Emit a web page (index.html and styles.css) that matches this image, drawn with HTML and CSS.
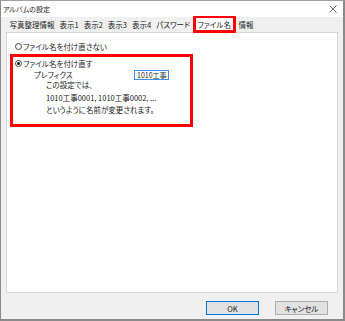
FILE: index.html
```html
<!DOCTYPE html>
<html lang="ja">
<head>
    <meta charset="UTF-8">
    <title>アルバムの設定</title>
    <link rel="stylesheet" href="styles.css">
</head>
<body>
    <div class="window">
        <div class="titlebar">
            <span class="title">アルバムの設定</span>
            <svg class="close" width="8" height="8" viewBox="0 0 8 8">
                <path d="M0.5 0.5 L7.5 7.5 M7.5 0.5 L0.5 7.5" stroke="#666" stroke-width="1" fill="none"/>
            </svg>
        </div>
        <div class="dialog-body">
            <div class="tabs">
                <div class="tab">写真整理情報</div>
                <div class="tab">表示1</div>
                <div class="tab">表示2</div>
                <div class="tab">表示3</div>
                <div class="tab">表示4</div>
                <div class="tab">パスワード</div>
                <div class="tab active">ファイル名</div>
                <div class="tab">情報</div>
            </div>
            <div class="panel">
                <div class="option first">
                    <span class="radio"></span>
                    <span>ファイル名を付け直さない</span>
                </div>
                <div class="highlight">
                    <div class="option">
                        <span class="radio checked"></span>
                        <span>ファイル名を付け直す</span>
                    </div>
                    <div class="prefix-row">
                        <span class="prefix-label">プレフィクス</span>
                        <span class="prefix-input">1010工事</span>
                    </div>
                    <div class="note">
                        <p>この設定では、</p>
                        <p>1010工事0001, 1010工事0002, ...</p>
                        <p>というように名前が変更されます。</p>
                    </div>
                </div>
            </div>
            <div class="buttons">
                <button class="btn default">OK</button>
                <button class="btn">キャンセル</button>
            </div>
        </div>
    </div>
</body>
</html>
```

FILE: styles.css
```css
:root {
    --face-color: #f0f0f0;
    --border-color: #d9d9d9;
    --text-color: #1a1a1a;
    --mark-color: #ff0000;
    --focus-color: #3d8ee6;
}

* {
    margin: 0;
    padding: 0;
    box-sizing: border-box;
}

body {
    width: 345px;
    height: 321px;
    font-family: 'Noto Sans CJK JP', 'Noto Sans', sans-serif;
    font-size: 7.5px;
    font-feature-settings: "palt";
    color: var(--text-color);
    background-color: var(--face-color);
}

.window {
    height: 321px;
    display: flex;
    flex-direction: column;
    border: 1px solid #a0a0a0;
    border-left-color: #8a8a8a;
    border-right: 2px solid #8a8a8a;
    border-bottom: 2px solid #8a8a8a;
    background-color: var(--face-color);
}

.titlebar {
    height: 16px;
    display: flex;
    align-items: center;
    justify-content: space-between;
    padding: 0 6px 0 2px;
    background-color: white;
}

.title {
    font-size: 7px;
}

.dialog-body {
    flex: 1;
    display: flex;
    flex-direction: column;
    padding: 0 5px 4px 5px;
}

/* Tab strip */
.tabs {
    display: flex;
    align-items: flex-end;
    height: 15px;
    padding-left: 1px;
}

.tab {
    height: 15px;
    line-height: 16px;
    padding: 0 2.5px;
    white-space: nowrap;
}

.tab.active {
    position: relative;
    height: 17px;
    line-height: 14px;
    margin-bottom: -1px;
    padding: 0 2px;
    background-color: white;
    border: 3px solid var(--mark-color);
    border-top-width: 2px;
    z-index: 1;
}

.panel {
    flex: 1;
    background-color: white;
    border: 1px solid var(--border-color);
    padding: 7px 0 0 3px;
}

.option {
    display: flex;
    align-items: center;
    height: 12px;
    gap: 1px;
}

.option.first {
    padding-left: 5px;
}

.radio {
    width: 7px;
    height: 7px;
    border: 1px solid #444;
    border-radius: 50%;
    background-color: white;
    position: relative;
}

.radio.checked::after {
    content: '';
    position: absolute;
    left: 1px;
    top: 1px;
    width: 3px;
    height: 3px;
    border-radius: 50%;
    background-color: #111;
}

/* Red annotation frame */
.highlight {
    width: 183px;
    margin-top: 2px;
    border: 3px solid var(--mark-color);
    padding: 0 0 7px 2px;
}

.prefix-row {
    display: flex;
    align-items: center;
    height: 11px;
    padding-left: 19px;
}

.prefix-label {
    width: 100px;
}

.prefix-input {
    width: 35px;
    height: 10px;
    line-height: 8px;
    padding-left: 2px;
    font-size: 7px;
    border: 1px solid var(--focus-color);
    white-space: nowrap;
}

.note {
    margin-top: -1px;
    padding-left: 31px;
}

.note p {
    line-height: 12.5px;
}

/* Bottom buttons */
.buttons {
    display: flex;
    justify-content: flex-end;
    gap: 16px;
    padding: 8px 10px 0 0;
}

.btn {
    width: 53px;
    height: 14px;
    font-family: inherit;
    font-size: 7.5px;
    font-feature-settings: "palt";
    color: var(--text-color);
    background-color: #e1e1e1;
    border: 1px solid #adadad;
}

.btn.default {
    border-color: #0078d7;
}
```
